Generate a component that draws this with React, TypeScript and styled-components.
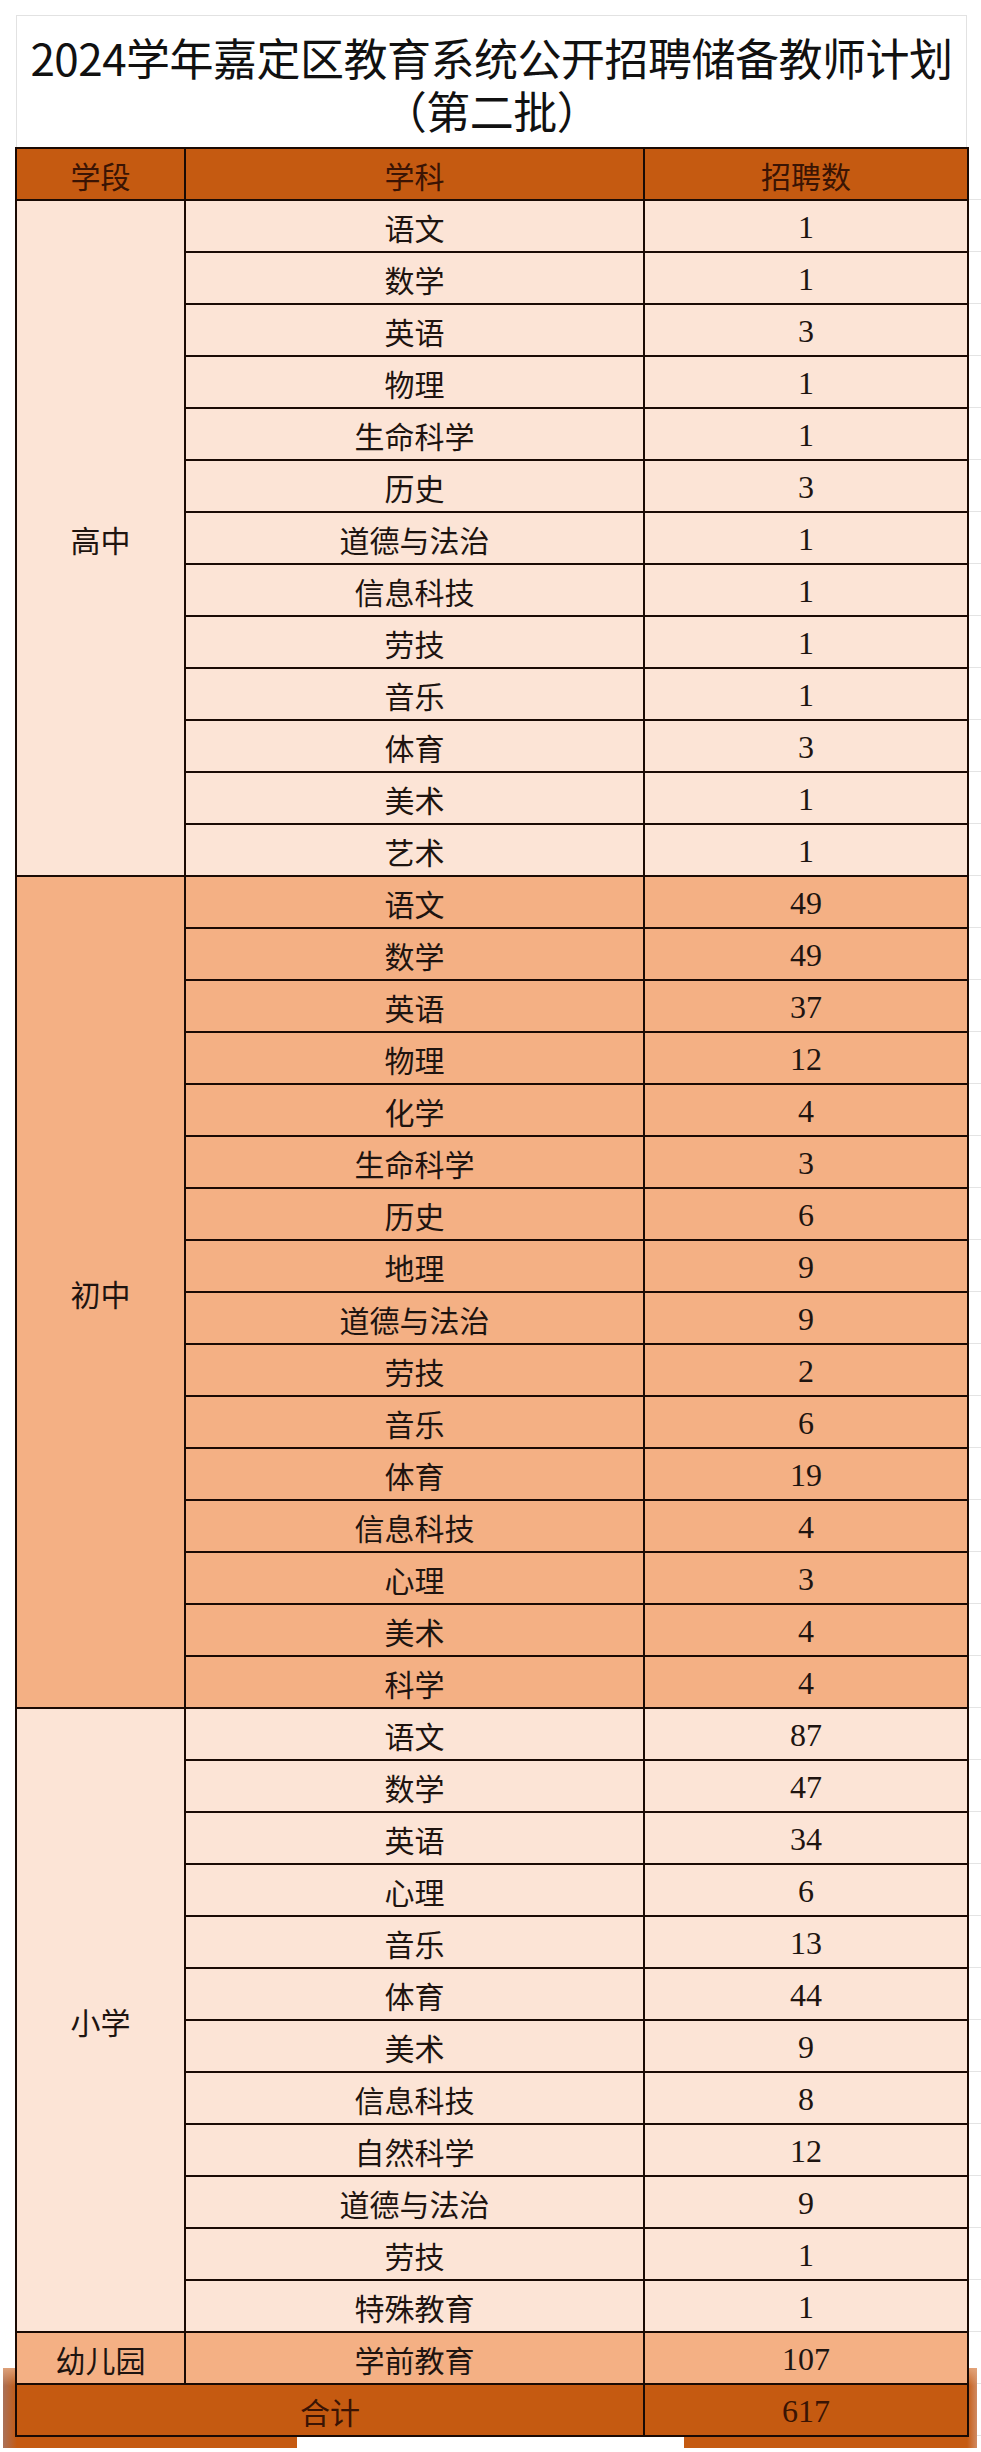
import React from "react";
import styled, { createGlobalStyle } from "styled-components";

const GlobalStyle = createGlobalStyle`
  html, body {
    margin: 0;
    padding: 0;
    background: #ffffff;
  }
  body {
    font-family: "Noto Sans CJK SC", "Noto Sans", sans-serif;
    color: #1a1a1a;
  }
`;

type Subject = { name: string; count: number };
type Stage = { label: string; tone: "light" | "mid"; subjects: Subject[] };

const STAGES: Stage[] = [
  {
    label: "高中",
    tone: "light",
    subjects: [
      { name: "语文", count: 1 },
      { name: "数学", count: 1 },
      { name: "英语", count: 3 },
      { name: "物理", count: 1 },
      { name: "生命科学", count: 1 },
      { name: "历史", count: 3 },
      { name: "道德与法治", count: 1 },
      { name: "信息科技", count: 1 },
      { name: "劳技", count: 1 },
      { name: "音乐", count: 1 },
      { name: "体育", count: 3 },
      { name: "美术", count: 1 },
      { name: "艺术", count: 1 },
    ],
  },
  {
    label: "初中",
    tone: "mid",
    subjects: [
      { name: "语文", count: 49 },
      { name: "数学", count: 49 },
      { name: "英语", count: 37 },
      { name: "物理", count: 12 },
      { name: "化学", count: 4 },
      { name: "生命科学", count: 3 },
      { name: "历史", count: 6 },
      { name: "地理", count: 9 },
      { name: "道德与法治", count: 9 },
      { name: "劳技", count: 2 },
      { name: "音乐", count: 6 },
      { name: "体育", count: 19 },
      { name: "信息科技", count: 4 },
      { name: "心理", count: 3 },
      { name: "美术", count: 4 },
      { name: "科学", count: 4 },
    ],
  },
  {
    label: "小学",
    tone: "light",
    subjects: [
      { name: "语文", count: 87 },
      { name: "数学", count: 47 },
      { name: "英语", count: 34 },
      { name: "心理", count: 6 },
      { name: "音乐", count: 13 },
      { name: "体育", count: 44 },
      { name: "美术", count: 9 },
      { name: "信息科技", count: 8 },
      { name: "自然科学", count: 12 },
      { name: "道德与法治", count: 9 },
      { name: "劳技", count: 1 },
      { name: "特殊教育", count: 1 },
    ],
  },
  {
    label: "幼儿园",
    tone: "mid",
    subjects: [{ name: "学前教育", count: 107 }],
  },
];

const TONES = {
  light: "#fce4d6",
  mid: "#f4b084",
  dark: "#c55a11",
};

const Page = styled.div`
  position: relative;
  isolation: isolate;
  width: 981px;
  height: 2452px;
  box-sizing: border-box;
  padding: 15px 0 0 15px;
  overflow: hidden;
  background: #ffffff;
`;

// faint spreadsheet gridlines showing to the right of the table
const GridLines = styled.div`
  position: absolute;
  top: 199px;
  right: 0;
  width: 12px;
  height: 2237px;
  z-index: -2;
  background: repeating-linear-gradient(
    to bottom,
    #e4e4e4 0 1px,
    transparent 1px 52px
  );
`;

const TitleBox = styled.div`
  width: 951px;
  margin-left: 1px;
  box-sizing: border-box;
  height: 131.5px;
  padding-top: 15px;
  border: 1px solid #e2e2e2;
  border-bottom: none;
  text-align: center;
  background: #ffffff;
`;

const TitleLine = styled.div`
  font-family: "Noto Sans CJK SC", sans-serif;
  font-size: 44px;
  line-height: 53px;
  color: #111111;
  letter-spacing: -0.5px;
  white-space: nowrap;
`;

const TableWrap = styled.div`
  position: relative;
  width: 954px;

  /* orange band smeared across the bottom of the sheet */
  &::before {
    content: "";
    position: absolute;
    left: -12px;
    right: -8px;
    bottom: -11.5px;
    height: 80px;
    z-index: -1;
    background:
      linear-gradient(to bottom, rgba(230, 170, 130, 0.85) 0, rgba(230, 170, 130, 0) 18px),
      linear-gradient(
        to right,
        #a9715a 0,
        #c55a11 14px,
        #c55a11 calc(100% - 10px),
        #d08a62 100%
      );
  }

  &::after {
    content: "";
    position: absolute;
    left: 282px;
    width: 387px;
    top: calc(100% + 0.5px);
    height: 20px;
    z-index: -1;
    background: #ffffff;
  }
`;

const Grid = styled.div`
  display: grid;
  grid-template-columns: 167px 457px 322px;
  grid-auto-rows: 50px;
  gap: 2px;
  padding: 2px;
  background: #1a0a04;
`;

const Cell = styled.div<{ $tone: "light" | "mid" | "dark"; $rows?: number; $cols?: number }>`
  display: flex;
  align-items: center;
  justify-content: center;
  padding-top: 3px;
  box-sizing: border-box;
  background: ${(p) => TONES[p.$tone]};
  grid-row: span ${(p) => p.$rows ?? 1};
  grid-column: span ${(p) => p.$cols ?? 1};
  font-family: "Noto Sans CJK SC", sans-serif;
  font-size: 30px;
  color: ${(p) => (p.$tone === "dark" ? "#3a1404" : "#1e1410")};
  white-space: nowrap;
`;

const Num = styled.span`
  font-family: "Liberation Serif", "Times New Roman", serif;
  font-size: 32px;
  color: inherit;
`;

export default function App() {
  return (
    <>
      <GlobalStyle />
      <Page>
        <GridLines />
        <TitleBox>
          <TitleLine>2024学年嘉定区教育系统公开招聘储备教师计划</TitleLine>
          <TitleLine>（第二批）</TitleLine>
        </TitleBox>
        <TableWrap>
          <Grid>
            <Cell $tone="dark">学段</Cell>
            <Cell $tone="dark">学科</Cell>
            <Cell $tone="dark">招聘数</Cell>
            {STAGES.map((stage) =>
              stage.subjects.map((s, i) => (
                <React.Fragment key={stage.label + s.name}>
                  {i === 0 && (
                    <Cell $tone={stage.tone} $rows={stage.subjects.length}>
                      {stage.label}
                    </Cell>
                  )}
                  <Cell $tone={stage.tone}>{s.name}</Cell>
                  <Cell $tone={stage.tone}>
                    <Num>{s.count}</Num>
                  </Cell>
                </React.Fragment>
              ))
            )}
            <Cell $tone="dark" $cols={2}>
              合计
            </Cell>
            <Cell $tone="dark">
              <Num>617</Num>
            </Cell>
          </Grid>
        </TableWrap>
      </Page>
    </>
  );
}
